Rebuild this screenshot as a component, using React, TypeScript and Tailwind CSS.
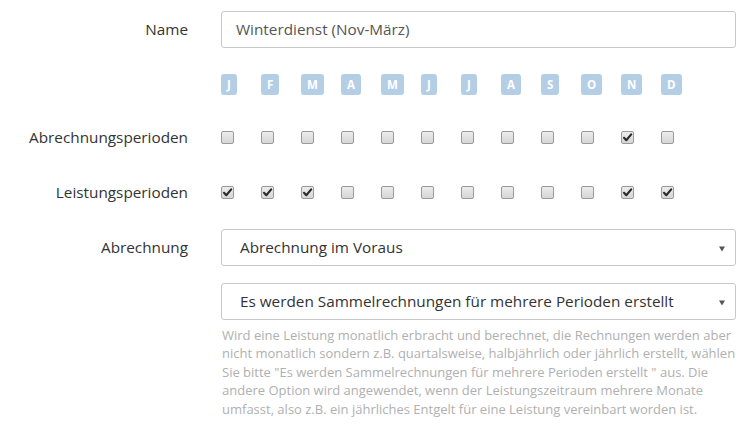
import React from "react";

const months = ["J", "F", "M", "A", "M", "J", "J", "A", "S", "O", "N", "D"];
const abr = [false, false, false, false, false, false, false, false, false, false, true, false];
const leist = [true, true, true, false, false, false, false, false, false, false, true, true];

function Check({ checked }: { checked: boolean }) {
  return (
    <div className="relative w-[13px] h-[13px] rounded-[2px] border border-[#9a9a9a] bg-gradient-to-b from-[#ececec] to-[#d6d6d6]">
      {checked && (
        <svg viewBox="0 0 13 13" className="absolute -left-px -top-px w-[13px] h-[13px]">
          <path d="M3 6.8 L5.3 9.2 L10.2 3.4" fill="none" stroke="#2b2b2b" strokeWidth="2.1" strokeLinecap="round" strokeLinejoin="round" />
        </svg>
      )}
    </div>
  );
}

function Label({ children }: { children: React.ReactNode }) {
  return <div className="w-[221px] shrink-0 pr-[33px] text-right text-[15.3px] text-[#333]">{children}</div>;
}

function Select({ text }: { text: string }) {
  return (
    <div className="relative w-[515px] h-[37px] border border-[#c8c8c8] rounded-[3px] bg-white flex items-center pl-[18px] text-[15.3px] text-[#333]">
      <span>{text}</span>
      <svg viewBox="0 0 6 6" className="absolute right-[10px] top-[16px] w-[6px] h-[6px]">
        <path d="M0 0.5 L6 0.5 L3 5.5 Z" fill="#555" />
      </svg>
    </div>
  );
}

export default function App() {
  return (
    <div className="w-[750px] h-[443px] bg-white overflow-hidden" style={{ fontFamily: '"Open Sans", "Noto Sans", sans-serif' }}>
      <div className="mt-[11px] flex items-center h-[37px]">
        <Label>Name</Label>
        <div className="w-[515px] h-[37px] border border-[#c8c8c8] rounded-[3px] flex items-center pl-[14px] text-[15.3px] text-[#555]">
          Winterdienst (Nov-März)
        </div>
      </div>

      <div className="mt-[26px] flex items-center h-[21px]">
        <div className="w-[221px] shrink-0" />
        <div className="flex">
          {months.map((m, i) => (
            <div key={i} className="w-[40px] flex">
              <span className="h-[21px] px-[6px] rounded-[3px] bg-[#b4cfe5] text-white text-[11.5px] font-bold leading-[21px]">{m}</span>
            </div>
          ))}
        </div>
      </div>

      <div className="mt-[23px] flex items-center h-[38px]">
        <Label>Abrechnungsperioden</Label>
        <div className="flex">
          {abr.map((c, i) => (
            <div key={i} className="w-[40px] flex">
              <Check checked={c} />
            </div>
          ))}
        </div>
      </div>

      <div className="mt-[17px] flex items-center h-[38px]">
        <Label>Leistungsperioden</Label>
        <div className="flex">
          {leist.map((c, i) => (
            <div key={i} className="w-[40px] flex">
              <Check checked={c} />
            </div>
          ))}
        </div>
      </div>

      <div className="mt-[18px] flex items-center h-[37px]">
        <Label>Abrechnung</Label>
        <Select text="Abrechnung im Voraus" />
      </div>

      <div className="mt-[17px] flex">
        <div className="w-[221px] shrink-0" />
        <div className="w-[515px]">
          <Select text="Es werden Sammelrechnungen für mehrere Perioden erstellt" />
          <p className="mt-[6px] text-[13px] leading-[18.4px] text-[#b0b0b0] pl-px">
            Wird eine Leistung monatlich erbracht und berechnet, die Rechnungen werden aber nicht monatlich sondern z.B. quartalsweise, halbjährlich oder jährlich erstellt, wählen Sie bitte "Es werden Sammelrechnungen für mehrere Perioden erstellt " aus. Die andere Option wird angewendet, wenn der Leistungszeitraum mehrere Monate umfasst, also z.B. ein jährliches Entgelt für eine Leistung vereinbart worden ist.
          </p>
        </div>
      </div>
    </div>
  );
}
